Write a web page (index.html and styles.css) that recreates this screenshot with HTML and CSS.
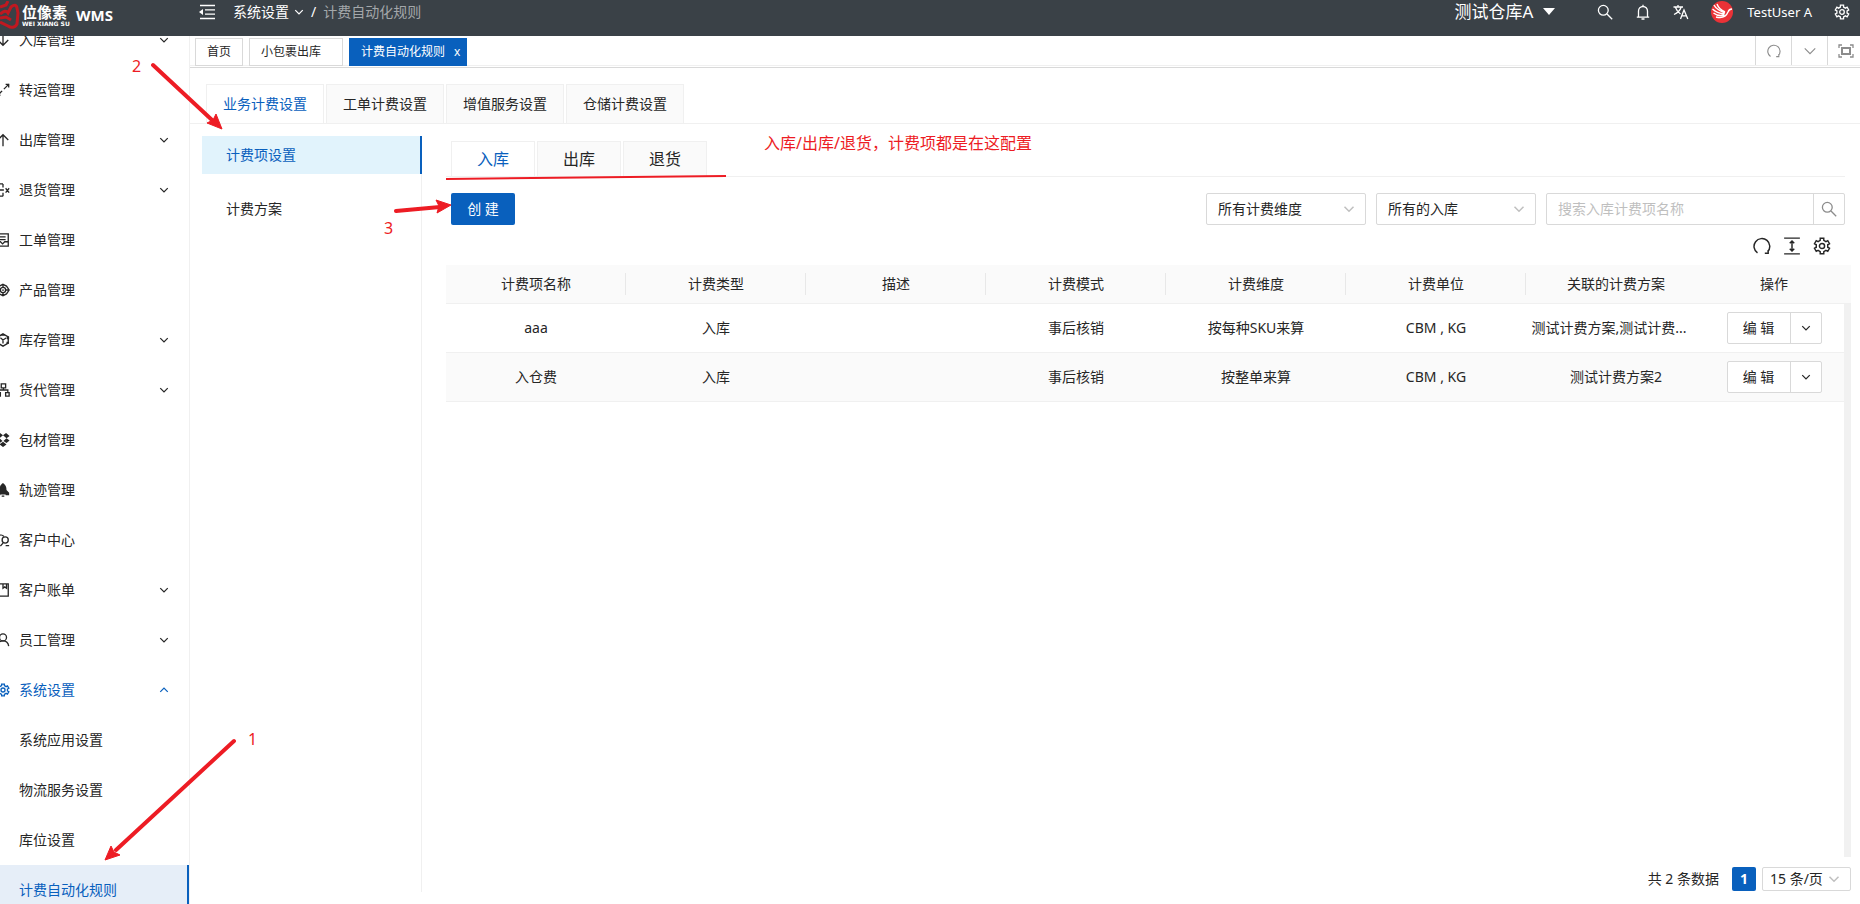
FILE: index.html
```
<!DOCTYPE html>
<html lang="zh-CN">
<head>
  <meta charset="UTF-8">
  <meta name="viewport" content="width=device-width, initial-scale=1.0">
  <title>计费自动化规则 - WMS</title>
  <link rel="stylesheet" href="styles.css">
</head>
<body>
  <!-- shared icons -->
  <svg class="sprite" aria-hidden="true">
    <symbol id="i-down" viewBox="0 0 16 16"><path d="M2 5l6 6 6-6"/></symbol>
    <symbol id="i-up" viewBox="0 0 16 16"><path d="M2 11l6-6 6 6"/></symbol>
    <symbol id="i-search" viewBox="0 0 16 16"><circle cx="6.3" cy="6.3" r="4.9"/><path d="M10 10l5.2 5.2"/></symbol>
    <symbol id="i-reload" viewBox="0 0 16 16"><path d="M4 14.200A7 7 0 1 1 13 13.200M13.500 11.500v3h-3"/></symbol>
    <symbol id="i-gear" viewBox="0 0 16 16"><path d="M6.4 3.05L6.43 1.18h3.14L9.6 3.05L11.48 4.14L13.12 3.23L14.69 5.95L13.09 6.92V9.08L14.69 10.05L13.12 12.77L11.48 11.86L9.6 12.95L9.57 14.82H6.43L6.4 12.95L4.52 11.86L2.88 12.77L1.31 10.05L2.91 9.08V6.92L1.31 5.95L2.88 3.23L4.52 4.14z"/><circle cx="8" cy="8" r="2.3"/></symbol>
  </svg>

  <header class="header">
    <div class="logo">
      <svg class="logo-mark" viewBox="0 0 20 28"><path d="M0 6l6-2 2-4M0 13c4-3 6-4 8-1l3-6q5-4 6 1l1 5-1 11c-2 4-6 4-9 2l-8-4M0 17l6-1 5 3"/></svg>
      <div class="logo-name">
        <strong>位像素</strong>
        <small>WEI XIANG SU</small>
      </div>
      <span class="logo-product">WMS</span>
    </div>
    <button class="icon-btn fold" aria-label="收起菜单">
      <svg class="icon" viewBox="0 0 16 16"><path d="M1 1.5h15M6 5.8h10M6 10.2h10M1 14.5h15"/><path class="fill" d="M0 8l4-3v6z"/></svg>
    </button>
    <nav class="breadcrumb">
      <a href="#">系统设置</a>
      <svg class="icon icon-xs"><use href="#i-down"/></svg>
      <span>/</span>
      <span class="current">计费自动化规则</span>
    </nav>
    <div class="header-right">
      <button class="warehouse">测试仓库A<svg viewBox="0 0 12 8"><path d="M0 0h12L6 7z"/></svg></button>
      <button class="icon-btn" aria-label="搜索"><svg class="icon"><use href="#i-search"/></svg></button>
      <button class="icon-btn" aria-label="通知"><svg class="icon" viewBox="0 0 16 16"><path d="M3.5 13V7a4.5 4.5 0 0 1 9 0v6M1.8 13.2h12.4M8 2.5V.8M6.5 15h3"/></svg></button>
      <button class="icon-btn" aria-label="语言"><svg class="icon" viewBox="0 0 16 16"><path d="M0.5 3h9.5M5 1v2M2.5 3.5c1 3 3 5 5 6.500M8 3.500c-1 3-3.500 5.500-7 7M7.500 15l3.500-9 3.800 9M9 11.800h4.500"/></svg></button>
      <a class="user" href="#">
        <svg class="avatar" viewBox="0 0 22 22"><circle cx="11" cy="11" r="11"/><path d="M3 4c2 4 6 6 11 8M1.500 8c3 3 7 4.500 12 5M2.500 12c3 2.500 7 3 11 2M6 3c1 3 4 6 8 8M5 16c6 1.500 10 0 12-5q1-3 4-3"/></svg>
        TestUser A
      </a>
      <button class="icon-btn" aria-label="设置"><svg class="icon"><use href="#i-gear"/></svg></button>
    </div>
  </header>

  <div class="main">
    <aside class="sidebar">
      <ul class="menu">
        <li><a href="#"><svg class="icon" viewBox="0 0 16 16"><path d="M8 1v13M2 8l6 6 6-6"/></svg>入库管理<svg class="arrow"><use href="#i-down"/></svg></a></li>
        <li><a href="#"><svg class="icon" viewBox="0 0 16 16"><path d="M9 7l6-6M11 1.500h3.500V5M7 9l-6 6M5 14H1.500v-3"/></svg>转运管理</a></li>
        <li><a href="#"><svg class="icon" viewBox="0 0 16 16"><path d="M8 15V2M2 8l6-6 6 6"/></svg>出库管理<svg class="arrow"><use href="#i-down"/></svg></a></li>
        <li><a href="#"><svg class="icon" viewBox="0 0 16 16"><path d="M8 1v4M8 11v4M1 1h7M1 15h7M3 8h6M3 5v6M11 6l4 5M15 6l-4 5"/></svg>退货管理<svg class="arrow"><use href="#i-down"/></svg></a></li>
        <li><a href="#"><svg class="icon" viewBox="0 0 16 16"><path d="M1 1h13v14H1zM4 4.500h7M4 7.500h7M1 10h4l2.500 2.500L10 10h4"/></svg>工单管理</a></li>
        <li><a href="#"><svg class="icon" viewBox="0 0 16 16"><path d="M8 1.500l4 2 3 4.500-3 4.500-4 2-4-2L1 8l3-4.500zM1 8h4M11 8h4M8 1.500V5M8 11v3.500"/><circle cx="8" cy="8" r="3"/><circle class="fill" cx="8" cy="8" r="1"/></svg>产品管理</a></li>
        <li><a href="#"><svg class="icon" viewBox="0 0 16 16"><path d="M8 1l6 3.500v7L8 15l-6-3.500v-7zM5 5.500L8 8l4-2.500M8 8v4"/><path class="fill" d="M6 1h4v2H6zM12.500 4H15v3h-2.500zM12 10h2.500v2.500H12z"/></svg>库存管理<svg class="arrow"><use href="#i-down"/></svg></a></li>
        <li><a href="#"><svg class="icon" viewBox="0 0 16 16"><path d="M6 1h5v4.500H6zM8.500 5.500V8M3 11V8h10.500v3M1 11h4v4H1zM11 11h4v4h-4z"/></svg>货代管理<svg class="arrow"><use href="#i-down"/></svg></a></li>
        <li><a href="#"><svg class="icon" viewBox="0 0 16 16"><path class="fill" d="M4.500 0L8 2.500 4 6 .5 3.500zM11.500 0L15.500 3.500 12 6 8 2.500zM4 6l3.500 3L4 11.500.5 8.500zM12 6l3.500 2.500L12 11.500 8.500 9zM8 10l4 3-4 3-4-3z"/></svg>包材管理</a></li>
        <li><a href="#"><svg class="icon" viewBox="0 0 16 16"><path class="fill" d="M8 0c3 2 4 4.500 4 8l3 3v3h-4v-1H5v1H1v-3l3-3c0-3.500 1-6 4-8z"/><path d="M6.500 15h3"/></svg>轨迹管理</a></li>
        <li><a href="#"><svg class="icon" viewBox="0 0 16 16"><path d="M2 10a4.500 4.500 0 1 1 7-6M5 15l3-3.500M11 14.500h4"/><circle cx="10.500" cy="8" r="3.500"/></svg>客户中心</a></li>
        <li><a href="#"><svg class="icon" viewBox="0 0 16 16"><path d="M1 1h13v14H1zM8 1v5l2-1.500L12 6V1"/></svg>客户账单<svg class="arrow"><use href="#i-down"/></svg></a></li>
        <li><a href="#"><svg class="icon" viewBox="0 0 16 16"><circle cx="8" cy="5" r="4"/><path d="M1.500 15c.5-4 3-6 6.500-6s6 2 6.500 6"/></svg>员工管理<svg class="arrow"><use href="#i-down"/></svg></a></li>
        <li class="open"><a href="#"><svg class="icon"><use href="#i-gear"/></svg>系统设置<svg class="arrow"><use href="#i-up"/></svg></a>
          <ul class="submenu">
            <li><a href="#">系统应用设置</a></li>
            <li><a href="#">物流服务设置</a></li>
            <li><a href="#">库位设置</a></li>
            <li><a class="active" href="#">计费自动化规则</a></li>
          </ul>
        </li>
      </ul>
    </aside>

    <div class="workspace">
      <div class="page-tabs">
        <a class="page-tab" href="#">首页</a>
        <a class="page-tab wide" href="#">小包裹出库</a>
        <a class="page-tab active" href="#">计费自动化规则<span>x</span></a>
        <div class="page-actions">
          <button aria-label="刷新"><svg class="icon icon-sm"><use href="#i-reload"/></svg></button>
          <button aria-label="更多"><svg class="icon icon-sm"><use href="#i-down"/></svg></button>
          <button aria-label="全屏"><svg class="icon" viewBox="0 0 16 16"><path d="M1 5V2h3M12 2h3v3M15 11v3h-3M4 14H1v-3"/><path class="bold" d="M4 5h8v6H4z"/></svg></button>
        </div>
      </div>

      <nav class="card-tabs">
        <a class="active" href="#">业务计费设置</a>
        <a href="#">工单计费设置</a>
        <a href="#">增值服务设置</a>
        <a href="#">仓储计费设置</a>
      </nav>

      <div class="content">
        <nav class="side-tabs">
          <a class="active" href="#">计费项设置</a>
          <a href="#">计费方案</a>
        </nav>

        <section class="panel">
          <nav class="type-tabs">
            <a class="active" href="#">入库</a>
            <a href="#">出库</a>
            <a href="#">退货</a>
          </nav>

          <div class="toolbar">
            <button class="btn-primary">创 建</button>
            <div class="filters">
              <div class="select">
                <select aria-label="计费维度"><option>所有计费维度</option></select>
                <svg><use href="#i-down"/></svg>
              </div>
              <div class="select">
                <select aria-label="入库类型"><option>所有的入库</option></select>
                <svg><use href="#i-down"/></svg>
              </div>
              <div class="search">
                <input type="text" aria-label="搜索" placeholder="搜索入库计费项名称">
                <button aria-label="搜索"><svg class="icon"><use href="#i-search"/></svg></button>
              </div>
            </div>
          </div>

          <div class="table-tools">
            <button aria-label="刷新"><svg class="icon"><use href="#i-reload"/></svg></button>
            <button aria-label="密度"><svg class="icon" viewBox="0 0 16 16"><path d="M1 1h14M1 15h14M8 4v8M6 5.500L8 3.500l2 2M6 10.500l2 2 2-2"/></svg></button>
            <button aria-label="列设置"><svg class="icon"><use href="#i-gear"/></svg></button>
          </div>

          <div class="table-wrap">
            <table>
              <thead>
                <tr>
                  <th>计费项名称</th>
                  <th>计费类型</th>
                  <th>描述</th>
                  <th>计费模式</th>
                  <th>计费维度</th>
                  <th>计费单位</th>
                  <th>关联的计费方案</th>
                  <th class="ops">操作</th>
                </tr>
              </thead>
              <tbody>
                <tr>
                  <td>aaa</td>
                  <td>入库</td>
                  <td></td>
                  <td>事后核销</td>
                  <td>按每种SKU来算</td>
                  <td>CBM , KG</td>
                  <td class="clipped">测试计费方案,测试计费...</td>
                  <td class="ops"><div class="btn-group"><button>编 辑</button><button aria-label="更多"><svg><use href="#i-down"/></svg></button></div></td>
                </tr>
                <tr>
                  <td>入仓费</td>
                  <td>入库</td>
                  <td></td>
                  <td>事后核销</td>
                  <td>按整单来算</td>
                  <td>CBM , KG</td>
                  <td>测试计费方案2</td>
                  <td class="ops"><div class="btn-group"><button>编 辑</button><button aria-label="更多"><svg><use href="#i-down"/></svg></button></div></td>
                </tr>
              </tbody>
            </table>
            <div class="scroll-track"></div>
          </div>

          <div class="pagination">
            <span>共 2 条数据</span>
            <button class="page">1</button>
            <div class="select small">
              <select aria-label="每页条数"><option>15 条/页</option></select>
              <svg><use href="#i-down"/></svg>
            </div>
          </div>
        </section>
      </div>
    </div>
  </div>

  <!-- guide marks drawn over the page -->
  <svg class="guide" aria-hidden="true">
    <path class="line" d="M153 65L212 120M234 741L116 850M396 211L440 207"/>
    <path class="rule" d="M446 179L726 176"/>
    <path class="head" d="M222 129L207 123L213 120L216 114zM105 860L111 846L114 852L120 855zM451 205L436 200L439 206L437 213z"/>
  </svg>
  <span class="mark mark-1">1</span>
  <span class="mark mark-2">2</span>
  <span class="mark mark-3">3</span>
  <span class="mark mark-note">入库/出库/退货，计费项都是在这配置</span>
</body>
</html>
```
FILE: styles.css
```
* {
  box-sizing: border-box;
  margin: 0;
  padding: 0;
}

body {
  display: flex;
  flex-direction: column;
  height: 100vh;
  overflow: hidden;
  background-color: #fff;
  color: #262626;
  font-family: "Noto Sans", "Noto Sans CJK SC", sans-serif;
  font-size: 14px;
  line-height: 22px;
}

a {
  color: inherit;
  text-decoration: none;
}

ul {
  list-style: none;
}

button,
input,
select {
  font: inherit;
  color: inherit;
  background: none;
  border: none;
  outline: none;
}

button {
  cursor: pointer;
}

svg {
  display: block;
  flex-shrink: 0;
  fill: none;
  stroke: currentColor;
}

.icon {
  width: 16px;
  height: 16px;
  stroke-width: 1.3;
}

.icon-sm {
  width: 14px;
  height: 14px;
}

.icon-xs {
  width: 10px;
  height: 10px;
  stroke-width: 2;
}

.fill {
  fill: currentColor;
  stroke: none;
}

.bold {
  stroke-width: 2;
}

.sprite {
  display: none;
}

/* header */
.header {
  display: flex;
  align-items: center;
  height: 36px;
  padding-bottom: 12px;
  background-color: #3a4147;
  color: #fff;
  flex-shrink: 0;
}

.logo {
  display: flex;
  align-items: center;
  width: 199px;
  padding-top: 5px;
}

.logo-mark {
  width: 20px;
  height: 28px;
  stroke: #c01820;
  stroke-width: 3;
}

.logo-name {
  display: flex;
  flex-direction: column;
  width: 56px;
  padding-left: 2px;
}

.logo-name strong {
  font-size: 15px;
  line-height: 18px;
}

.logo-name small {
  font-family: "DejaVu Sans", sans-serif;
  font-size: 6px;
  line-height: 6px;
  font-weight: bold;
  white-space: nowrap;
}

.logo-product {
  font-size: 15px;
  font-weight: bold;
}

.icon-btn {
  display: flex;
}

.breadcrumb {
  display: flex;
  align-items: center;
  gap: 5px;
  margin-left: 18px;
}

.breadcrumb span {
  margin-left: 2px;
}

.breadcrumb .current {
  color: #a3a7aa;
}

.header-right {
  display: flex;
  align-items: center;
  margin-left: auto;
  padding-right: 10px;
  gap: 22px;
}

.warehouse {
  display: flex;
  align-items: center;
  gap: 10px;
  margin-right: 20px;
  font-size: 17px;
}

.warehouse svg {
  width: 12px;
  height: 8px;
  fill: #fff;
  stroke: none;
}

.user {
  display: flex;
  align-items: center;
  gap: 14px;
  font-size: 13px;
}

.avatar {
  width: 22px;
  height: 22px;
  stroke: #fff;
  stroke-width: 1.4;
}

.avatar circle {
  fill: #ea3237;
  stroke: none;
}

/* sidebar */
.main {
  display: flex;
  flex: 1;
  min-height: 0;
}

.sidebar {
  width: 190px;
  overflow: hidden;
  border-right: 1px solid #f0f0f0;
  flex-shrink: 0;
}

.menu {
  margin-top: -21px;
}

.menu a {
  display: flex;
  align-items: center;
  height: 50px;
}

.menu .icon {
  width: 14px;
  height: 14px;
  margin-left: -4px;
  margin-right: 9px;
  stroke-width: 1.5;
}

.menu .arrow {
  width: 10px;
  height: 10px;
  margin-left: auto;
  margin-right: 20px;
  stroke-width: 2;
}

.menu .open > a {
  color: #0960bd;
}

.menu .submenu a {
  padding-left: 19px;
}

.submenu .active {
  background-color: #e6eef8;
  border-right: 2px solid #0960bd;
  color: #0960bd;
}

/* opened pages */
.workspace {
  display: flex;
  flex-direction: column;
  flex: 1;
  min-width: 0;
}

.page-tabs {
  display: flex;
  align-items: flex-end;
  gap: 6px;
  height: 30px;
  padding-left: 5px;
  border-bottom: 1px solid #f0f0f0;
  font-size: 12px;
}

.page-tab {
  display: flex;
  align-items: center;
  height: 28px;
  margin-bottom: -1px;
  padding: 0 11px;
  border: 1px solid #d9d9d9;
}

.page-tab.wide {
  padding-right: 21px;
}

.page-tab.active {
  background-color: #0960bd;
  border-color: #0960bd;
  color: #fff;
  padding-right: 6px;
}

.page-tab span {
  margin-left: 9px;
}

.page-actions {
  display: flex;
  align-self: stretch;
  margin-left: auto;
  color: #8c8c8c;
}

.page-actions button {
  display: flex;
  align-items: center;
  justify-content: center;
  width: 36px;
  border-left: 1px solid #d9d9d9;
}

.page-actions button:last-child {
  width: 33px;
  padding-left: 4px;
}

/* tabs of the page */
.card-tabs,
.type-tabs {
  display: flex;
  gap: 2px;
  border-bottom: 1px solid #f0f0f0;
}

.card-tabs {
  margin-top: 1px;
  padding: 16px 16px 0;
  border-top: 1px solid #d9d9d9;
}

.card-tabs a,
.type-tabs a {
  background-color: #fafafa;
  border: 1px solid #f0f0f0;
  border-bottom: none;
  text-align: center;
}

.card-tabs a {
  width: 118px;
  height: 39px;
  line-height: 38px;
}

.card-tabs .active,
.type-tabs .active {
  background-color: #fff;
  color: #0960bd;
  margin-bottom: -1px;
}

.content {
  display: flex;
  flex: 1;
  min-height: 0;
  padding: 12px 9px 12px 12px;
}

.side-tabs {
  display: flex;
  flex-direction: column;
  gap: 16px;
  width: 220px;
  border-right: 1px solid #f0f0f0;
  flex-shrink: 0;
}

.side-tabs a {
  height: 38px;
  padding-left: 24px;
  line-height: 38px;
}

.side-tabs .active {
  background-color: #e1f3fc;
  border-right: 2px solid #0960bd;
  color: #0960bd;
  margin-right: -1px;
}

.panel {
  display: flex;
  flex-direction: column;
  flex: 1;
  min-width: 0;
  padding: 5px 0 0 24px;
}

.type-tabs {
  margin-right: 6px;
  padding-left: 5px;
  font-size: 16px;
}

.type-tabs a {
  width: 84px;
  height: 35px;
  line-height: 34px;
}

.toolbar {
  display: flex;
  justify-content: space-between;
  padding: 16px 6px 0 5px;
}

.btn-primary {
  width: 64px;
  height: 32px;
  border-radius: 2px;
  background-color: #0960bd;
  color: #fff;
}

.filters {
  display: flex;
  gap: 10px;
}

.select {
  position: relative;
  width: 160px;
  height: 32px;
  border: 1px solid #d9d9d9;
  border-radius: 2px;
}

.select select {
  width: 100%;
  height: 100%;
  padding-left: 11px;
  appearance: none;
}

.select svg {
  position: absolute;
  top: 9px;
  right: 10px;
  width: 12px;
  height: 12px;
  color: #bfbfbf;
  stroke-width: 2;
  pointer-events: none;
}

.search {
  display: flex;
  width: 299px;
  height: 32px;
  border: 1px solid #d9d9d9;
  border-radius: 2px;
}

.search input {
  flex: 1;
  min-width: 0;
  padding-left: 11px;
}

.search input::placeholder {
  color: #bfbfbf;
}

.search button {
  display: flex;
  align-items: center;
  justify-content: center;
  width: 31px;
  border-left: 1px solid #d9d9d9;
  color: #8c8c8c;
}

.table-tools {
  display: flex;
  justify-content: flex-end;
  gap: 12px;
  padding: 12px 20px 10px 0;
}

.table-tools .icon {
  width: 18px;
  height: 18px;
}

/* table */
.table-wrap {
  position: relative;
  flex: 1;
}

table {
  width: 100%;
  table-layout: fixed;
  border-collapse: separate;
  border-spacing: 0;
  text-align: center;
}

th {
  height: 39px;
  background: linear-gradient(#e8e8e8, #e8e8e8) right center / 1px 22px no-repeat #fafafa;
  border-bottom: 1px solid #f0f0f0;
  font-weight: normal;
}

td {
  height: 49px;
  border-bottom: 1px solid #f0f0f0;
  white-space: nowrap;
}

tbody tr:nth-child(even) {
  background-color: #fafafa;
}

.clipped {
  padding-right: 14px;
}

.ops {
  width: 145px;
  padding-right: 9px;
}

th.ops,
th:nth-last-child(2) {
  background: #fafafa;
}

.btn-group {
  display: inline-flex;
  height: 32px;
  background-color: #fff;
  border: 1px solid #d9d9d9;
  border-radius: 2px;
  vertical-align: middle;
}

.btn-group button {
  width: 62px;
}

.btn-group button + button {
  display: flex;
  align-items: center;
  justify-content: center;
  width: 31px;
  border-left: 1px solid #d9d9d9;
}

.btn-group svg {
  width: 10px;
  height: 10px;
  stroke-width: 2;
}

.scroll-track {
  position: absolute;
  top: 39px;
  right: 0;
  bottom: 0;
  width: 7px;
  background-color: #f1f1f1;
}

.pagination {
  display: flex;
  align-items: center;
  justify-content: flex-end;
  padding: 10px 0 1px;
}

.pagination .page {
  width: 24px;
  height: 24px;
  margin: 0 6px 0 13px;
  border-radius: 2px;
  background-color: #0960bd;
  color: #fff;
  font-weight: bold;
}

.select.small {
  width: 89px;
  height: 24px;
}

.select.small select {
  padding-left: 7px;
}

.select.small svg {
  top: 5px;
}

/* guide marks */
.guide {
  position: absolute;
  top: 0;
  left: 0;
  width: 100%;
  height: 100%;
  pointer-events: none;
  stroke: #ed1c24;
}

.guide .line {
  stroke-width: 4;
  stroke-linecap: round;
}

.guide .rule {
  stroke-width: 2;
}

.guide .head {
  fill: #ed1c24;
}

.mark {
  position: absolute;
  color: #ed1c24;
  font-size: 16px;
}

.mark-1 {
  top: 728px;
  left: 248px;
}

.mark-2 {
  top: 55px;
  left: 132px;
}

.mark-3 {
  top: 217px;
  left: 384px;
}

.mark-note {
  top: 132px;
  left: 764px;
}
```
